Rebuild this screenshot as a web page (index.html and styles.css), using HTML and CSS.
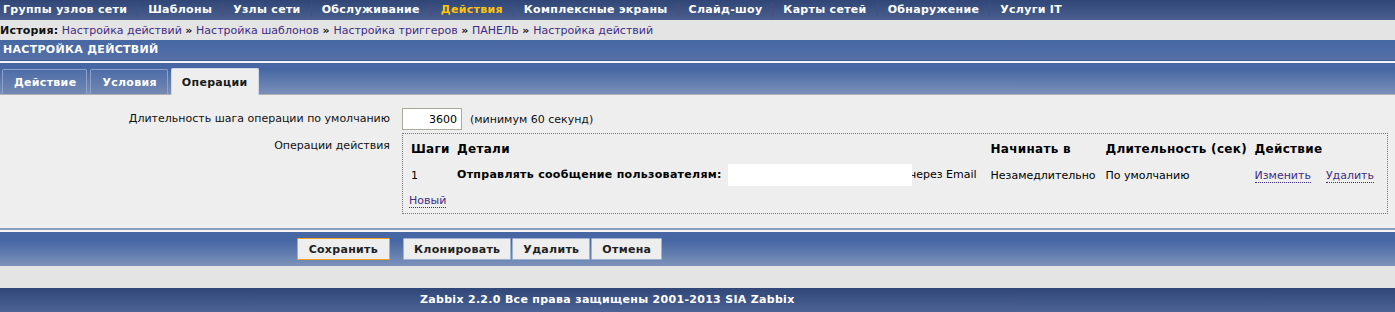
FILE: index.html
```html
<!DOCTYPE html>
<html lang="ru">
<head>
    <meta charset="UTF-8" />
    <title>Настройка действий</title>
    <link rel="stylesheet" href="styles.css">
</head>
<body>

    <div class="menu">
        <a href="#">Группы узлов сети</a>
        <a href="#">Шаблоны</a>
        <a href="#">Узлы сети</a>
        <a href="#">Обслуживание</a>
        <a href="#" class="selected">Действия</a>
        <a href="#">Комплексные экраны</a>
        <a href="#">Слайд-шоу</a>
        <a href="#">Карты сетей</a>
        <a href="#">Обнаружение</a>
        <a href="#">Услуги IT</a>
    </div>

    <div class="history">
        <b>История:</b>
        <a href="#">Настройка действий</a> <b>»</b>
        <a href="#">Настройка шаблонов</a> <b>»</b>
        <a href="#">Настройка триггеров</a> <b>»</b>
        <a href="#">ПАНЕЛЬ</a> <b>»</b>
        <a href="#">Настройка действий</a>
    </div>

    <div class="header-title">НАСТРОЙКА ДЕЙСТВИЙ</div>

    <div class="tabs">
        <a href="#" class="tab">Действие</a>
        <a href="#" class="tab">Условия</a>
        <a href="#" class="tab active">Операции</a>
    </div>

    <div class="content">
        <div class="form-row">
            <div class="form-label">Длительность шага операции по умолчанию</div>
            <div class="form-field">
                <input type="text" class="input-num" value="3600" />
                <span class="hint">(минимум 60 секунд)</span>
            </div>
        </div>
        <div class="form-row">
            <div class="form-label">Операции действия</div>
            <div class="form-field">
                <div class="ops-box">
                    <table class="ops">
                        <tr>
                            <th class="c-step">Шаги</th>
                            <th class="c-details">Детали</th>
                            <th class="c-start">Начинать в</th>
                            <th class="c-dur">Длительность (сек)</th>
                            <th class="c-act">Действие</th>
                        </tr>
                        <tr>
                            <td>1</td>
                            <td class="details"><b>Отправлять сообщение пользователям:</b><span class="masked"></span>через Email</td>
                            <td>Незамедлительно</td>
                            <td>По умолчанию</td>
                            <td class="acts"><a href="#">Изменить</a><a href="#">Удалить</a></td>
                        </tr>
                    </table>
                    <a href="#" class="new-link">Новый</a>
                </div>
            </div>
        </div>
    </div>

    <div class="buttons">
        <div class="buttons-left">
            <button class="btn main">Сохранить</button>
        </div>
        <div class="buttons-right">
            <button class="btn">Клонировать</button><button class="btn">Удалить</button><button class="btn">Отмена</button>
        </div>
    </div>

    <div class="spacer"></div>

    <div class="footer">Zabbix 2.2.0 Все права защищены 2001-2013 SIA Zabbix</div>

</body>
</html>
```

FILE: styles.css
```css
body {
    margin: 0;
    font-family: 'DejaVu Sans', Verdana, sans-serif;
    font-size: 11px;
    background-color: #eeeeee;
    color: #000;
}

b, th {
    letter-spacing: 0.3px;
}

a {
    color: #3e2c84;
    text-decoration: none;
}

.menu {
    height: 20px;
    display: flex;
    align-items: center;
    padding-left: 3px;
    background: linear-gradient(#2f4677, #4a5f8f);
}

.menu a {
    color: #fff;
    font-weight: bold;
    letter-spacing: 0.3px;
    padding: 0 10px;
    border-left: 1px solid #4d4a78;
    line-height: 14px;
}

.menu a:first-child {
    padding-left: 0;
    border-left: none;
}

.menu a.selected {
    color: #ffc40c;
}

.history {
    height: 20px;
    line-height: 21px;
    background-color: #e4e4e4;
    color: #000;
    white-space: nowrap;
}

.history b {
    color: #111;
    letter-spacing: 0.2px;
}

.header-title {
    height: 20px;
    line-height: 20px;
    padding-left: 3px;
    color: #fff;
    font-weight: bold;
    letter-spacing: 0.3px;
    background: linear-gradient(#4767a4, #5470a6);
    border-bottom: 1px solid #3f5f9c;
    box-shadow: 0 2px 0 #f4f4f4;
}

.tabs {
    margin-top: 2px;
    height: 31px;
    display: flex;
    align-items: flex-end;
    padding-left: 2px;
    gap: 4px;
    background: linear-gradient(#4767a4 20%, #7b90b9);
    border-bottom: 1px solid #b0b0b0;
}

.tab {
    height: 25px;
    line-height: 26px;
    padding: 0 10px 0 11px;
    font-weight: bold;
    letter-spacing: 0.3px;
    color: #fff;
    border: 1px solid #8ca2c9;
    border-bottom: none;
    border-radius: 2px 2px 0 0;
    background: linear-gradient(#4d6ca7, #7489b3);
    box-sizing: border-box;
    margin-right: -1px;
}

.tab.active {
    height: 27px;
    line-height: 28px;
    color: #1a1a1a;
    background: #eeeeee;
    border-color: #d0d8e8;
    padding: 0 10px;
    margin-bottom: -1px;
}

.content {
    padding: 13px 0 11px;
}

.form-row {
    display: flex;
    margin-bottom: 3px;
}

.form-label {
    width: 390px;
    text-align: right;
    padding-top: 4px;
    padding-right: 12px;
    flex-shrink: 0;
    color: #111;
}

.form-row:nth-child(2) .form-label {
    padding-top: 6px;
}

.form-field {
    flex: 1;
    padding-right: 7px;
    display: flex;
    align-items: center;
    gap: 8px;
}

.input-num {
    width: 60px;
    height: 22px;
    box-sizing: border-box;
    border: 1px solid #aaa99a;
    text-align: right;
    padding: 0 4px;
    font-family: inherit;
    font-size: 11px;
    background: #fff;
    color: #000;
}

.hint {
    color: #111;
}

.ops-box {
    flex: 1;
    border: 1px dotted #777;
    padding: 4px 4px 5px 5px;
}

.ops {
    border-collapse: collapse;
    width: 100%;
}

.ops th {
    font-size: 12px;
    text-align: left;
    padding: 4px 3px 4px;
    white-space: nowrap;
}

.ops td {
    padding: 4px 3px 5px;
    white-space: nowrap;
    vertical-align: middle;
}

.c-step { width: 40px; }
.c-start { width: 109px; }
.c-dur { width: 143px; }
.c-act { width: 1px; }

.masked {
    display: inline-block;
    width: 184px;
    height: 22px;
    margin-left: 6px;
    margin-right: -2px;
    background: #fff;
    vertical-align: middle;
    position: relative;
    z-index: 1;
}

.acts a {
    margin-right: 15px;
    border-bottom: 1px dotted #3e2c84;
}

.acts a:last-child {
    margin-right: 6px;
}

.new-link {
    display: inline-block;
    margin-left: 1px;
    margin-top: 3px;
    border-bottom: 1px dotted #3e2c84;
}

.buttons {
    border-top: 2px solid #8a9fbb;
    box-shadow: inset 0 2px 0 #f6f6f6;
    padding-top: 2px;
    height: 34px;
    display: flex;
    align-items: center;
    background: linear-gradient(#4767a4 30%, #7d92ba);
    background-clip: content-box;
}

.buttons-left {
    width: 390px;
    display: flex;
    justify-content: flex-end;
    padding-right: 13px;
    box-sizing: content-box;
}

.buttons-right {
    display: flex;
    gap: 1px;
}

.btn {
    height: 22px;
    padding: 0 10px;
    font-family: inherit;
    font-size: 11px;
    font-weight: bold;
    letter-spacing: 0.3px;
    color: #222;
    background: #eeeeee;
    border: 1px solid #9fb2d2;
    border-radius: 1px;
    cursor: pointer;
}

.btn.main {
    border: 1px solid #f4a21e;
    padding: 0 11px;
}

.spacer {
    height: 22px;
    background-color: #e4e4e4;
}

.footer {
    height: 24px;
    line-height: 24px;
    padding-left: 420px;
    color: #fff;
    font-weight: bold;
    letter-spacing: 0.3px;
    background: linear-gradient(#2f4677, #4d6396);
}
```
